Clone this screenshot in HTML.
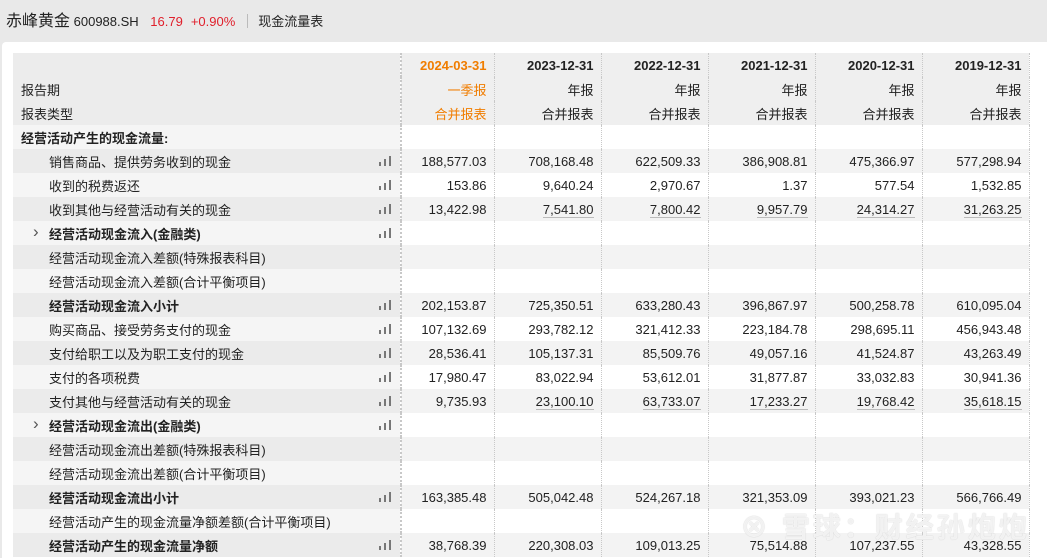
<!DOCTYPE html>
<html><head><meta charset="utf-8"><style>
*{margin:0;padding:0;box-sizing:border-box}
body{width:1047px;height:558px;background:#e9e9e9;font-family:"Liberation Sans","Noto Sans CJK SC",sans-serif;overflow:hidden;position:relative;color:#222}
.top{position:absolute;left:6px;top:7px;font-size:13px;white-space:nowrap}
.top .n{font-size:16px}
.top .r{color:#e0202c;margin-left:8px}
.top .sep{display:inline-block;width:1px;height:14px;background:#bbb;margin:0 10px 0 12px;vertical-align:-2px}
.panel{position:absolute;left:2px;top:42px;width:1045px;height:516px;background:#fff;border-radius:4px 0 0 0}
table{position:absolute;left:13px;top:53px;border-collapse:collapse;table-layout:fixed;font-size:13px}
td{height:24px;padding:0 7px 0 0;text-align:right;white-space:nowrap;border-right:1px dotted #c8c8c8}
td.l{text-align:left;padding-left:8px;position:relative;border-right:2px dotted #c8c8c8}
tr.h td{background:#efefef;height:24px}
tr.h td.l{background:#ececec}
tr.h .o{color:#f07d00}
tr.g td{background:#f3f3f3}
tr.g td.l{background:#ebebeb}
tr.w td.l{background:#f5f5f5}
.b{font-weight:bold}
.i1{padding-left:36px!important}
.ic{position:absolute;right:8px;top:7px;width:13px;height:10px}
.ic i{position:absolute;bottom:0;width:2px;background:#777}
u{text-decoration:none;border-bottom:1px solid #bbb}
.arr{position:absolute;left:20px;top:1px;color:#555;font-size:17px;font-weight:normal}
.wm{position:absolute;left:740px;top:506px;font-size:28px;color:rgba(255,255,255,.8);text-shadow:0 0 1px #bbb;letter-spacing:3px;font-weight:bold}
</style></head><body>
<div class="top"><span class="n">赤峰黄金</span> 600988.SH <span class="r">16.79</span><span class="r">+0.90%</span><span class="sep"></span>现金流量表</div>
<div class="panel"></div>
<table>
<colgroup><col style="width:388px"><col style="width:93px"><col style="width:107px"><col style="width:107px"><col style="width:107px"><col style="width:107px"><col style="width:107px"></colgroup>
<tr class="h"><td class="l"></td><td class="o b">2024-03-31</td><td class="b">2023-12-31</td><td class="b">2022-12-31</td><td class="b">2021-12-31</td><td class="b">2020-12-31</td><td class="b">2019-12-31</td></tr>
<tr class="h"><td class="l">报告期</td><td class="o">一季报</td><td>年报</td><td>年报</td><td>年报</td><td>年报</td><td>年报</td></tr>
<tr class="h"><td class="l">报表类型</td><td class="o">合并报表</td><td>合并报表</td><td>合并报表</td><td>合并报表</td><td>合并报表</td><td>合并报表</td></tr>
<tr class="w"><td class="l b">经营活动产生的现金流量:</td><td></td><td></td><td></td><td></td><td></td><td></td></tr>
<tr class="g"><td class="l i1">销售商品、提供劳务收到的现金<span class="ic"><i style="left:0;height:4px"></i><i style="left:5px;height:7px"></i><i style="left:10px;height:10px"></i></span></td><td>188,577.03</td><td>708,168.48</td><td>622,509.33</td><td>386,908.81</td><td>475,366.97</td><td>577,298.94</td></tr>
<tr class="w"><td class="l i1">收到的税费返还<span class="ic"><i style="left:0;height:4px"></i><i style="left:5px;height:7px"></i><i style="left:10px;height:10px"></i></span></td><td>153.86</td><td>9,640.24</td><td>2,970.67</td><td>1.37</td><td>577.54</td><td>1,532.85</td></tr>
<tr class="g"><td class="l i1">收到其他与经营活动有关的现金<span class="ic"><i style="left:0;height:4px"></i><i style="left:5px;height:7px"></i><i style="left:10px;height:10px"></i></span></td><td>13,422.98</td><td><u>7,541.80</u></td><td><u>7,800.42</u></td><td><u>9,957.79</u></td><td><u>24,314.27</u></td><td><u>31,263.25</u></td></tr>
<tr class="w"><td class="l i1 b"><span class="arr">›</span>经营活动现金流入(金融类)<span class="ic"><i style="left:0;height:4px"></i><i style="left:5px;height:7px"></i><i style="left:10px;height:10px"></i></span></td><td></td><td></td><td></td><td></td><td></td><td></td></tr>
<tr class="g"><td class="l i1">经营活动现金流入差额(特殊报表科目)</td><td></td><td></td><td></td><td></td><td></td><td></td></tr>
<tr class="w"><td class="l i1">经营活动现金流入差额(合计平衡项目)</td><td></td><td></td><td></td><td></td><td></td><td></td></tr>
<tr class="g"><td class="l i1 b">经营活动现金流入小计<span class="ic"><i style="left:0;height:4px"></i><i style="left:5px;height:7px"></i><i style="left:10px;height:10px"></i></span></td><td>202,153.87</td><td>725,350.51</td><td>633,280.43</td><td>396,867.97</td><td>500,258.78</td><td>610,095.04</td></tr>
<tr class="w"><td class="l i1">购买商品、接受劳务支付的现金<span class="ic"><i style="left:0;height:4px"></i><i style="left:5px;height:7px"></i><i style="left:10px;height:10px"></i></span></td><td>107,132.69</td><td>293,782.12</td><td>321,412.33</td><td>223,184.78</td><td>298,695.11</td><td>456,943.48</td></tr>
<tr class="g"><td class="l i1">支付给职工以及为职工支付的现金<span class="ic"><i style="left:0;height:4px"></i><i style="left:5px;height:7px"></i><i style="left:10px;height:10px"></i></span></td><td>28,536.41</td><td>105,137.31</td><td>85,509.76</td><td>49,057.16</td><td>41,524.87</td><td>43,263.49</td></tr>
<tr class="w"><td class="l i1">支付的各项税费<span class="ic"><i style="left:0;height:4px"></i><i style="left:5px;height:7px"></i><i style="left:10px;height:10px"></i></span></td><td>17,980.47</td><td>83,022.94</td><td>53,612.01</td><td>31,877.87</td><td>33,032.83</td><td>30,941.36</td></tr>
<tr class="g"><td class="l i1">支付其他与经营活动有关的现金<span class="ic"><i style="left:0;height:4px"></i><i style="left:5px;height:7px"></i><i style="left:10px;height:10px"></i></span></td><td>9,735.93</td><td><u>23,100.10</u></td><td><u>63,733.07</u></td><td><u>17,233.27</u></td><td><u>19,768.42</u></td><td><u>35,618.15</u></td></tr>
<tr class="w"><td class="l i1 b"><span class="arr">›</span>经营活动现金流出(金融类)<span class="ic"><i style="left:0;height:4px"></i><i style="left:5px;height:7px"></i><i style="left:10px;height:10px"></i></span></td><td></td><td></td><td></td><td></td><td></td><td></td></tr>
<tr class="g"><td class="l i1">经营活动现金流出差额(特殊报表科目)</td><td></td><td></td><td></td><td></td><td></td><td></td></tr>
<tr class="w"><td class="l i1">经营活动现金流出差额(合计平衡项目)</td><td></td><td></td><td></td><td></td><td></td><td></td></tr>
<tr class="g"><td class="l i1 b">经营活动现金流出小计<span class="ic"><i style="left:0;height:4px"></i><i style="left:5px;height:7px"></i><i style="left:10px;height:10px"></i></span></td><td>163,385.48</td><td>505,042.48</td><td>524,267.18</td><td>321,353.09</td><td>393,021.23</td><td>566,766.49</td></tr>
<tr class="w"><td class="l i1">经营活动产生的现金流量净额差额(合计平衡项目)</td><td></td><td></td><td></td><td></td><td></td><td></td></tr>
<tr class="g"><td class="l i1 b">经营活动产生的现金流量净额<span class="ic"><i style="left:0;height:4px"></i><i style="left:5px;height:7px"></i><i style="left:10px;height:10px"></i></span></td><td>38,768.39</td><td>220,308.03</td><td>109,013.25</td><td>75,514.88</td><td>107,237.55</td><td>43,328.55</td></tr>
</table>
<div class="wm">⊗ 雪球：财经孙炮炮</div>
</body></html>
